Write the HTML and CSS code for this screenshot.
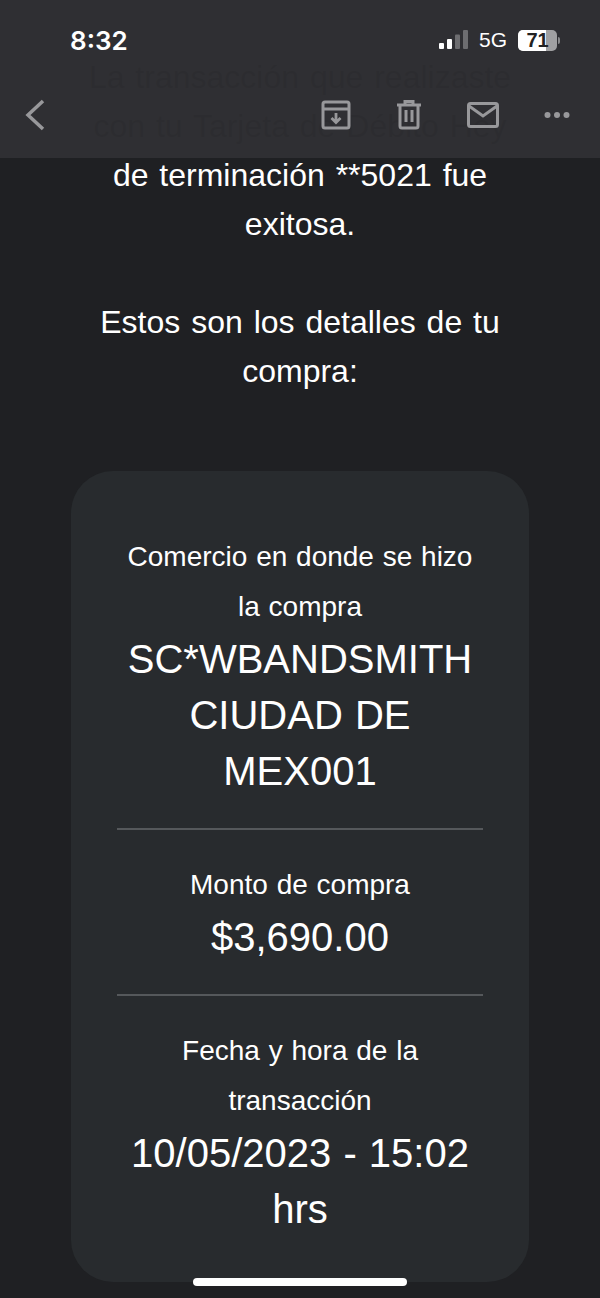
FILE: index.html
```html
<!DOCTYPE html>
<html lang="es">
  <head>
    <meta charset="UTF-8" />
    <meta name="viewport" content="width=device-width, initial-scale=1.0" />
    <title>Correo</title>
    <link rel="stylesheet" href="styles.css">
  </head>
  <body>
    <main class="mail">
      <p class="intro">
        <span class="under">La transacción que realizaste<br>con tu Tarjeta de Débito Hey</span><br>
        de terminación **5021 fue<br>exitosa.
      </p>
      <p class="intro details">Estos son los detalles de tu<br>compra:</p>

      <section class="card">
        <div class="item">
          <p class="label">Comercio en donde se hizo la compra</p>
          <p class="value">SC*WBANDSMITH CIUDAD DE MEX001</p>
        </div>
        <div class="item">
          <p class="label">Monto de compra</p>
          <p class="value">$3,690.00</p>
        </div>
        <div class="item">
          <p class="label">Fecha y hora de la transacción</p>
          <p class="value">10/05/2023 - 15:02 hrs</p>
        </div>
      </section>
    </main>

    <header class="top">
      <div class="status">
        <span class="time">8:32</span>
        <div class="statusRight">
          <svg class="signal" width="30" height="20" viewBox="0 0 30 20">
            <rect x="0" y="13" width="5" height="6" rx="1" fill="#fff" />
            <rect x="8" y="9" width="5" height="10" rx="1" fill="#fff" />
            <rect x="16" y="4.500" width="5" height="14.500" rx="1" fill="#6d6d70" />
            <rect x="24" y="0" width="5" height="19" rx="1" fill="#6d6d70" />
          </svg>
          <span class="net">5G</span>
          <div class="battery"><span class="batteryFill"></span><span class="batteryText">71</span></div>
          <span class="batteryTip"></span>
        </div>
      </div>
      <nav class="tools">
        <svg class="back" width="22" height="32" viewBox="0 0 22 32" fill="none">
          <path d="M19 2 L4 16 L19 30" stroke="#98989b" stroke-width="3.500" />
        </svg>
        <div class="actions">
          <svg width="30" height="30" viewBox="0 0 30 30" fill="none" stroke="#98989b" stroke-width="3">
            <path d="M2 9 V4 Q2 2 4 2 H26 Q28 2 28 4 V9 M2 9 H28 V26 Q28 28 26 28 H4 Q2 28 2 26 V9 Z" />
            <path d="M15 13 V22 M10.500 18 L15 22.500 L19.500 18" stroke-width="2.800" />
          </svg>
          <svg width="26" height="30" viewBox="0 0 26 30" fill="none" stroke="#98989b" stroke-width="3">
            <path d="M1 5 H25 M9 4 V1.500 H17 V4 M4 5 V26 Q4 28 6 28 H20 Q22 28 22 26 V5" />
            <path d="M10 10 V22 M16 10 V22" />
          </svg>
          <svg width="32" height="26" viewBox="0 0 32 26" fill="none" stroke="#98989b" stroke-width="3">
            <rect x="1.500" y="1.500" width="29" height="23" rx="2" />
            <path d="M2 4 L16 14 L30 4" />
          </svg>
          <svg width="26" height="8" viewBox="0 0 26 8" fill="#98989b">
            <circle cx="3.500" cy="4" r="3" />
            <circle cx="13" cy="4" r="3" />
            <circle cx="22.500" cy="4" r="3" />
          </svg>
        </div>
      </nav>
    </header>

    <div class="homeBar"></div>
  </body>
</html>
```

FILE: styles.css
```css
* {
  box-sizing: border-box;
}

html,
body {
  margin: 0;
  height: 1298px;
  overflow: hidden;
}

body {
  font-family: "Liberation Sans", Arial, sans-serif;
  background-color: #1f2023;
  color: #fff;
  position: relative;
}

p {
  margin: 0;
}

.mail {
  padding-top: 53px;
}

.intro {
  font-size: 32px;
  line-height: 49px;
  text-align: center;
  word-spacing: 2px;
}

.under {
  color: #0c0c0e;
}

.details {
  margin-top: 49px;
}

.card {
  width: 458px;
  height: 811px;
  margin: 75px auto 0;
  padding: 61px 46px 0;
  background-color: #282b2e;
  border-radius: 42px;
  text-align: center;
}

.item {
  padding-bottom: 29px;
  margin-bottom: 30px;
  border-bottom: 2px solid #55585b;
}

.item:last-child {
  border-bottom: none;
}

.label {
  font-size: 28px;
  line-height: 50px;
  word-spacing: 1px;
}

.value {
  margin-top: -1px;
  font-size: 40px;
  line-height: 56px;
  word-spacing: 1px;
}

.top {
  position: absolute;
  top: 0;
  left: 0;
  width: 600px;
  height: 158px;
  background-color: rgba(50, 50, 54, 0.85);
  padding: 0 30px 0 24px;
}

.status {
  display: flex;
  justify-content: space-between;
  align-items: center;
  height: 80px;
  padding-left: 46px;
  padding-right: 10px;
}

.time {
  font-family: Inter, "Liberation Sans", sans-serif;
  font-size: 26px;
  font-weight: 600;
}

.statusRight {
  display: flex;
  align-items: center;
}

.signal {
  margin-right: 10px;
}

.net {
  font-size: 21px;
  margin-right: 11px;
}

.battery {
  position: relative;
  width: 39px;
  height: 21px;
  border-radius: 5px;
  background-color: #a0a0a2;
  overflow: hidden;
}

.batteryFill {
  display: block;
  width: 28px;
  height: 21px;
  background-color: #fff;
}

.batteryText {
  position: absolute;
  inset: 0;
  color: #222;
  font-size: 20px;
  font-weight: 700;
  line-height: 21px;
  text-align: center;
}

.batteryTip {
  width: 2px;
  height: 7px;
  margin-left: 1px;
  border-radius: 0 2px 2px 0;
  background-color: #8a8a8c;
}

.tools {
  display: flex;
  justify-content: space-between;
  align-items: center;
  height: 70px;
}

.actions {
  display: flex;
  align-items: center;
  gap: 45px;
}

.homeBar {
  position: absolute;
  left: 193px;
  top: 1278px;
  width: 214px;
  height: 8px;
  border-radius: 4px;
  background-color: #fff;
}
```
